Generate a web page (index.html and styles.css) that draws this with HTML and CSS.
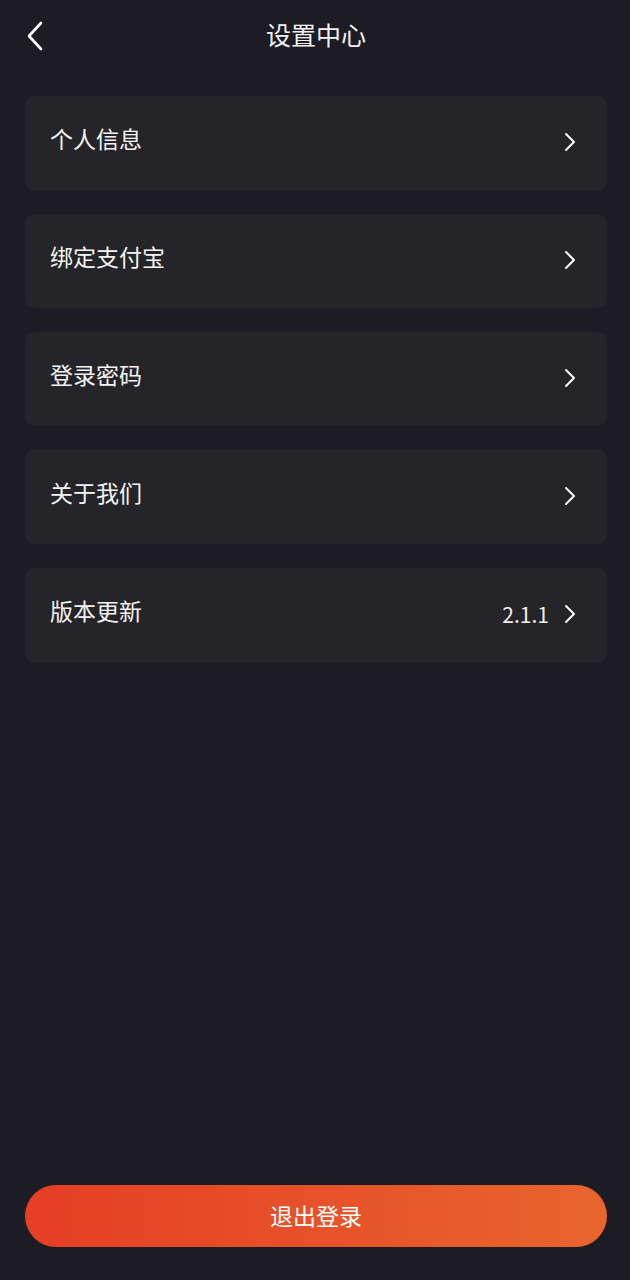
FILE: index.html
```html
<!DOCTYPE html>
<html lang="zh">
<head>
<meta charset="utf-8">
<title>设置中心</title>
<link rel="stylesheet" href="styles.css">
</head>
<body>
<div class="page">
  <header class="header">
    <span class="back">
      <svg width="18" height="30" viewBox="0 0 18 30"><path d="M16 2 L4 15 L16 28" fill="none" stroke="#fff" stroke-width="2.6" stroke-linecap="round" stroke-linejoin="round"/></svg>
    </span>
    <h1 class="title">设置中心</h1>
  </header>
  <ul class="list">
    <li class="item"><span class="label">个人信息</span><span class="right"><svg class="chev" width="14" height="20" viewBox="0 0 14 20"><path d="M3 2 L11 10 L3 18" fill="none" stroke="#fff" stroke-width="2" stroke-linecap="round" stroke-linejoin="round"/></svg></span></li>
    <li class="item"><span class="label">绑定支付宝</span><span class="right"><svg class="chev" width="14" height="20" viewBox="0 0 14 20"><path d="M3 2 L11 10 L3 18" fill="none" stroke="#fff" stroke-width="2" stroke-linecap="round" stroke-linejoin="round"/></svg></span></li>
    <li class="item"><span class="label">登录密码</span><span class="right"><svg class="chev" width="14" height="20" viewBox="0 0 14 20"><path d="M3 2 L11 10 L3 18" fill="none" stroke="#fff" stroke-width="2" stroke-linecap="round" stroke-linejoin="round"/></svg></span></li>
    <li class="item"><span class="label">关于我们</span><span class="right"><svg class="chev" width="14" height="20" viewBox="0 0 14 20"><path d="M3 2 L11 10 L3 18" fill="none" stroke="#fff" stroke-width="2" stroke-linecap="round" stroke-linejoin="round"/></svg></span></li>
    <li class="item"><span class="label">版本更新</span><span class="right"><span class="version">2.1.1</span><svg class="chev" width="14" height="20" viewBox="0 0 14 20"><path d="M3 2 L11 10 L3 18" fill="none" stroke="#fff" stroke-width="2" stroke-linecap="round" stroke-linejoin="round"/></svg></span></li>
  </ul>
  <div class="footer">
    <button class="logout">退出登录</button>
  </div>
</div>
</body>
</html>
```

FILE: styles.css
```css
* { box-sizing: border-box; }
html, body { margin: 0; padding: 0; }
body {
  background: #1d1c24;
  color: #fff;
  font-family: "Noto Sans CJK SC", "Noto Sans", sans-serif;
}
.page {
  min-height: 1280px;
  display: flex;
  flex-direction: column;
  padding: 0 23px 33px 25px;
}
.header {
  position: relative;
  height: 72px;
  display: flex;
  align-items: center;
  justify-content: center;
}
.back {
  position: absolute;
  left: 0;
  top: 21px;
  display: flex;
}
.title {
  margin: -4px 0 0;
  font-size: 25px;
  font-weight: 400;
  line-height: 1;
  color: #f2f2f2;
}
.list {
  list-style: none;
  margin: 24px 0 0;
  padding: 0;
  display: flex;
  flex-direction: column;
  gap: 24px;
}
.item {
  height: 94px;
  background: #242429;
  border-radius: 9px;
  display: flex;
  align-items: center;
  justify-content: space-between;
  padding: 0 30px 0 25px;
}
.label {
  font-size: 23px;
  line-height: 1;
  color: #f4f4f4;
  margin-top: -9px;
}
.right {
  display: flex;
  align-items: center;
  gap: 14px;
  margin-top: -2px;
}
.version {
  font-size: 21px;
  line-height: 1;
  color: #f0f0f0;
  margin-top: 0;
}
.chev { display: block; }
.footer {
  margin-top: auto;
}
.logout {
  display: block;
  width: 100%;
  height: 62px;
  border: none;
  border-radius: 31px;
  background: linear-gradient(90deg, #e53e25 0%, #e8652e 100%);
  color: #fff;
  font-family: "Noto Sans CJK SC", "Noto Sans", sans-serif;
  font-size: 23px;
  line-height: 1;
  padding: 0 0 2px;
}
```
